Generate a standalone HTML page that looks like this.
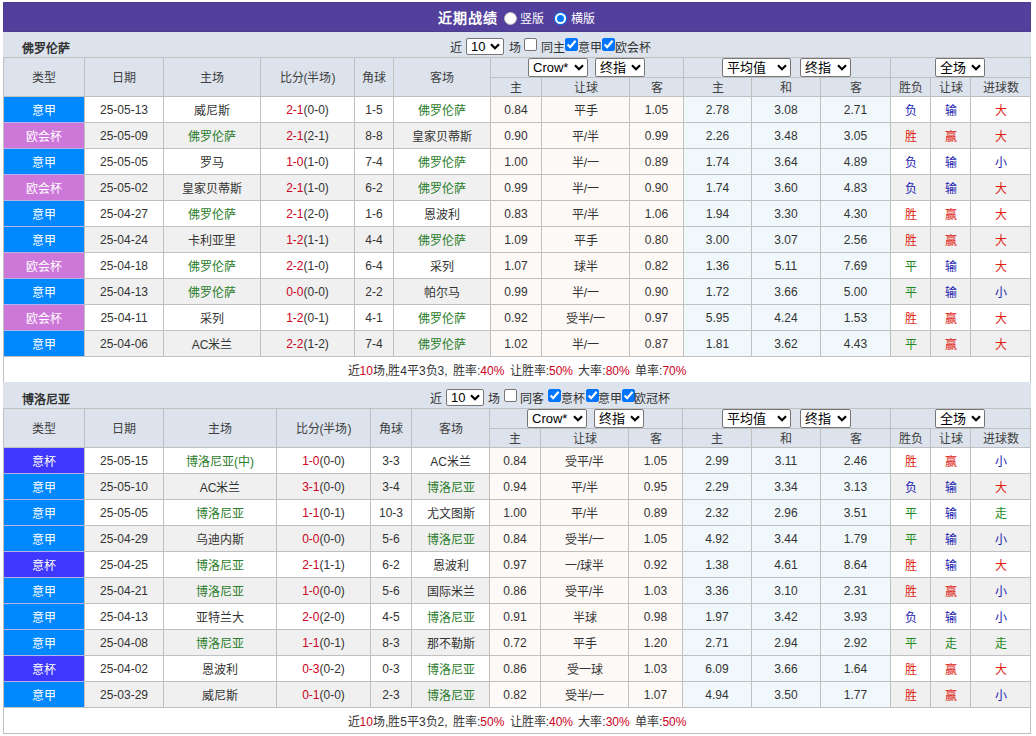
<!DOCTYPE html><html lang="zh-CN"><head><meta charset="utf-8"><style>
*{margin:0;padding:0;box-sizing:border-box}
html,body{width:1036px;height:736px;overflow:hidden;background:#fff}
body{position:relative;font-family:"Liberation Sans",sans-serif;font-size:12px;color:#333}
body>div{position:absolute}
.t{white-space:nowrap}
.g{background:#c0c0c0}
.sel{background:#fff;border:1px solid #767676;border-radius:2px;display:flex;align-items:center;padding-left:4px;color:#000;font-size:13px;white-space:nowrap}
.sel span{flex:1;line-height:14px}
.sel svg{margin-right:3px;flex:none}
.cb{width:13px;height:13px;border:1px solid #767676;border-radius:2px;background:#fff}
.cb.on{background:#0075ff;border-color:#0075ff}
.cb svg{position:absolute;left:-1px;top:-1px}
.rd{width:13px;height:13px;border-radius:50%;background:#fff;border:1px solid #bbb}
.rd.on{background:#0075ff;border:none}
.rd.on b{position:absolute;left:1px;top:1px;width:11px;height:11px;border-radius:50%;background:#0075ff;border:2px solid #fff}
</style></head><body><div style="left:3px;top:2px;width:1028px;height:30px;background:#52409c;box-sizing:border-box;border:1px solid #4b3e8c;"></div>
<div class="t" style="left:438px;top:9px;letter-spacing:1px;font-size:14px;font-weight:bold;color:#fff;line-height:18px;">近期战绩</div>
<div class="rd" style="left:504px;top:12px"></div>
<div class="t" style="left:520px;top:11px;color:#fff;line-height:16px;">竖版</div>
<div class="rd on" style="left:554px;top:12px"><b></b></div>
<div class="t" style="left:571px;top:11px;color:#fff;line-height:16px;">横版</div>
<div style="left:3px;top:32px;width:1028px;height:25px;background:#dce3ec;"></div>
<div class="t" style="left:22px;top:41px;font-weight:600;color:#333;line-height:16px;">佛罗伦萨</div>
<div class="t" style="left:450px;top:40px;line-height:16px;color:#333;">近</div>
<div class="sel" style="left:466px;top:38px;width:38px;height:17px;"><span>10</span><svg width="10" height="7" viewBox="0 0 10 7"><path d="M1 1.2 L5 5.2 L9 1.2" stroke="#000" stroke-width="2.2" fill="none"/></svg></div>
<div class="t" style="left:509px;top:40px;line-height:16px;color:#333;">场</div>
<div class="cb" style="left:524px;top:38px"></div>
<div class="t" style="left:541px;top:40px;line-height:16px;color:#333;">同主</div>
<div class="cb on" style="left:565px;top:38px"><svg width="13" height="13" viewBox="0 0 13 13"><path d="M2.6 6.4 L5.2 9.2 L10.6 2.8" stroke="#fff" stroke-width="2.2" fill="none"/></svg></div>
<div class="t" style="left:578px;top:40px;line-height:16px;color:#333;">意甲</div>
<div class="cb on" style="left:602px;top:38px"><svg width="13" height="13" viewBox="0 0 13 13"><path d="M2.6 6.4 L5.2 9.2 L10.6 2.8" stroke="#fff" stroke-width="2.2" fill="none"/></svg></div>
<div class="t" style="left:615px;top:40px;line-height:16px;color:#333;">欧会杯</div>
<div style="left:3px;top:57px;width:1028px;height:40px;background:#dce3ec;"></div>
<div style="left:4px;top:58px;width:80px;height:38px;display:flex;align-items:center;justify-content:center;color:#404040;padding-bottom:2px;">类型</div>
<div style="left:85px;top:58px;width:78px;height:38px;display:flex;align-items:center;justify-content:center;color:#404040;padding-bottom:2px;">日期</div>
<div style="left:164px;top:58px;width:96px;height:38px;display:flex;align-items:center;justify-content:center;color:#404040;padding-bottom:2px;">主场</div>
<div style="left:261px;top:58px;width:93px;height:38px;display:flex;align-items:center;justify-content:center;color:#404040;padding-bottom:2px;">比分(半场)</div>
<div style="left:355px;top:58px;width:38px;height:38px;display:flex;align-items:center;justify-content:center;color:#404040;padding-bottom:2px;">角球</div>
<div style="left:394px;top:58px;width:96px;height:38px;display:flex;align-items:center;justify-content:center;color:#404040;padding-bottom:2px;">客场</div>
<div style="left:491px;top:78px;width:50px;height:18px;display:flex;align-items:center;justify-content:center;color:#404040;padding-bottom:1px;">主</div>
<div style="left:542px;top:78px;width:87px;height:18px;display:flex;align-items:center;justify-content:center;color:#404040;padding-bottom:1px;">让球</div>
<div style="left:630px;top:78px;width:53px;height:18px;display:flex;align-items:center;justify-content:center;color:#404040;padding-bottom:1px;">客</div>
<div style="left:684px;top:78px;width:67px;height:18px;display:flex;align-items:center;justify-content:center;color:#404040;padding-bottom:1px;">主</div>
<div style="left:752px;top:78px;width:68px;height:18px;display:flex;align-items:center;justify-content:center;color:#404040;padding-bottom:1px;">和</div>
<div style="left:821px;top:78px;width:69px;height:18px;display:flex;align-items:center;justify-content:center;color:#404040;padding-bottom:1px;">客</div>
<div style="left:891px;top:78px;width:39px;height:18px;display:flex;align-items:center;justify-content:center;color:#404040;padding-bottom:1px;">胜负</div>
<div style="left:931px;top:78px;width:39px;height:18px;display:flex;align-items:center;justify-content:center;color:#404040;padding-bottom:1px;">让球</div>
<div style="left:971px;top:78px;width:59px;height:18px;display:flex;align-items:center;justify-content:center;color:#404040;padding-bottom:1px;">进球数</div>
<div style="left:3px;top:96px;width:1028px;height:27px;background:#ffffff;"></div>
<div style="left:4px;top:97px;width:80px;height:25px;background:#0088ff;"></div>
<div style="left:491px;top:97px;width:192px;height:25px;background:#fdf9f6;"></div>
<div style="left:684px;top:97px;width:206px;height:25px;background:#f0f8fc;"></div>
<div style="left:4px;top:97px;width:80px;height:25px;display:flex;align-items:center;justify-content:center;color:#fff;">意甲</div>
<div style="left:85px;top:97px;width:78px;height:25px;display:flex;align-items:center;justify-content:center;color:#333;">25-05-13</div>
<div style="left:164px;top:97px;width:96px;height:25px;display:flex;align-items:center;justify-content:center;color:#333;">威尼斯</div>
<div style="left:261px;top:97px;width:93px;height:25px;display:flex;align-items:center;justify-content:center;color:#333;"><span style="color:#cc0022">2-1</span>(0-0)</div>
<div style="left:355px;top:97px;width:38px;height:25px;display:flex;align-items:center;justify-content:center;color:#333;">1-5</div>
<div style="left:394px;top:97px;width:96px;height:25px;display:flex;align-items:center;justify-content:center;color:#2a7d2a;">佛罗伦萨</div>
<div style="left:491px;top:97px;width:50px;height:25px;display:flex;align-items:center;justify-content:center;color:#333;">0.84</div>
<div style="left:542px;top:97px;width:87px;height:25px;display:flex;align-items:center;justify-content:center;color:#333;">平手</div>
<div style="left:630px;top:97px;width:53px;height:25px;display:flex;align-items:center;justify-content:center;color:#333;">1.05</div>
<div style="left:684px;top:97px;width:67px;height:25px;display:flex;align-items:center;justify-content:center;color:#333;">2.78</div>
<div style="left:752px;top:97px;width:68px;height:25px;display:flex;align-items:center;justify-content:center;color:#333;">3.08</div>
<div style="left:821px;top:97px;width:69px;height:25px;display:flex;align-items:center;justify-content:center;color:#333;">2.71</div>
<div style="left:891px;top:97px;width:39px;height:25px;display:flex;align-items:center;justify-content:center;color:#1a1ab0;">负</div>
<div style="left:931px;top:97px;width:39px;height:25px;display:flex;align-items:center;justify-content:center;color:#1a1ab0;">输</div>
<div style="left:971px;top:97px;width:59px;height:25px;display:flex;align-items:center;justify-content:center;color:#dd2211;">大</div>
<div style="left:3px;top:122px;width:1028px;height:27px;background:#f0f0f0;"></div>
<div style="left:4px;top:123px;width:80px;height:25px;background:#cd78d8;"></div>
<div style="left:491px;top:123px;width:192px;height:25px;background:#fdf9f6;"></div>
<div style="left:684px;top:123px;width:206px;height:25px;background:#f0f8fc;"></div>
<div style="left:4px;top:123px;width:80px;height:25px;display:flex;align-items:center;justify-content:center;color:#fff;">欧会杯</div>
<div style="left:85px;top:123px;width:78px;height:25px;display:flex;align-items:center;justify-content:center;color:#333;">25-05-09</div>
<div style="left:164px;top:123px;width:96px;height:25px;display:flex;align-items:center;justify-content:center;color:#2a7d2a;">佛罗伦萨</div>
<div style="left:261px;top:123px;width:93px;height:25px;display:flex;align-items:center;justify-content:center;color:#333;"><span style="color:#cc0022">2-1</span>(2-1)</div>
<div style="left:355px;top:123px;width:38px;height:25px;display:flex;align-items:center;justify-content:center;color:#333;">8-8</div>
<div style="left:394px;top:123px;width:96px;height:25px;display:flex;align-items:center;justify-content:center;color:#333;">皇家贝蒂斯</div>
<div style="left:491px;top:123px;width:50px;height:25px;display:flex;align-items:center;justify-content:center;color:#333;">0.90</div>
<div style="left:542px;top:123px;width:87px;height:25px;display:flex;align-items:center;justify-content:center;color:#333;">平/半</div>
<div style="left:630px;top:123px;width:53px;height:25px;display:flex;align-items:center;justify-content:center;color:#333;">0.99</div>
<div style="left:684px;top:123px;width:67px;height:25px;display:flex;align-items:center;justify-content:center;color:#333;">2.26</div>
<div style="left:752px;top:123px;width:68px;height:25px;display:flex;align-items:center;justify-content:center;color:#333;">3.48</div>
<div style="left:821px;top:123px;width:69px;height:25px;display:flex;align-items:center;justify-content:center;color:#333;">3.05</div>
<div style="left:891px;top:123px;width:39px;height:25px;display:flex;align-items:center;justify-content:center;color:#dd2211;">胜</div>
<div style="left:931px;top:123px;width:39px;height:25px;display:flex;align-items:center;justify-content:center;color:#dd2211;">赢</div>
<div style="left:971px;top:123px;width:59px;height:25px;display:flex;align-items:center;justify-content:center;color:#dd2211;">大</div>
<div style="left:3px;top:148px;width:1028px;height:27px;background:#ffffff;"></div>
<div style="left:4px;top:149px;width:80px;height:25px;background:#0088ff;"></div>
<div style="left:491px;top:149px;width:192px;height:25px;background:#fdf9f6;"></div>
<div style="left:684px;top:149px;width:206px;height:25px;background:#f0f8fc;"></div>
<div style="left:4px;top:149px;width:80px;height:25px;display:flex;align-items:center;justify-content:center;color:#fff;">意甲</div>
<div style="left:85px;top:149px;width:78px;height:25px;display:flex;align-items:center;justify-content:center;color:#333;">25-05-05</div>
<div style="left:164px;top:149px;width:96px;height:25px;display:flex;align-items:center;justify-content:center;color:#333;">罗马</div>
<div style="left:261px;top:149px;width:93px;height:25px;display:flex;align-items:center;justify-content:center;color:#333;"><span style="color:#cc0022">1-0</span>(1-0)</div>
<div style="left:355px;top:149px;width:38px;height:25px;display:flex;align-items:center;justify-content:center;color:#333;">7-4</div>
<div style="left:394px;top:149px;width:96px;height:25px;display:flex;align-items:center;justify-content:center;color:#2a7d2a;">佛罗伦萨</div>
<div style="left:491px;top:149px;width:50px;height:25px;display:flex;align-items:center;justify-content:center;color:#333;">1.00</div>
<div style="left:542px;top:149px;width:87px;height:25px;display:flex;align-items:center;justify-content:center;color:#333;">半/一</div>
<div style="left:630px;top:149px;width:53px;height:25px;display:flex;align-items:center;justify-content:center;color:#333;">0.89</div>
<div style="left:684px;top:149px;width:67px;height:25px;display:flex;align-items:center;justify-content:center;color:#333;">1.74</div>
<div style="left:752px;top:149px;width:68px;height:25px;display:flex;align-items:center;justify-content:center;color:#333;">3.64</div>
<div style="left:821px;top:149px;width:69px;height:25px;display:flex;align-items:center;justify-content:center;color:#333;">4.89</div>
<div style="left:891px;top:149px;width:39px;height:25px;display:flex;align-items:center;justify-content:center;color:#1a1ab0;">负</div>
<div style="left:931px;top:149px;width:39px;height:25px;display:flex;align-items:center;justify-content:center;color:#1a1ab0;">输</div>
<div style="left:971px;top:149px;width:59px;height:25px;display:flex;align-items:center;justify-content:center;color:#1a1ab0;">小</div>
<div style="left:3px;top:174px;width:1028px;height:27px;background:#f0f0f0;"></div>
<div style="left:4px;top:175px;width:80px;height:25px;background:#cd78d8;"></div>
<div style="left:491px;top:175px;width:192px;height:25px;background:#fdf9f6;"></div>
<div style="left:684px;top:175px;width:206px;height:25px;background:#f0f8fc;"></div>
<div style="left:4px;top:175px;width:80px;height:25px;display:flex;align-items:center;justify-content:center;color:#fff;">欧会杯</div>
<div style="left:85px;top:175px;width:78px;height:25px;display:flex;align-items:center;justify-content:center;color:#333;">25-05-02</div>
<div style="left:164px;top:175px;width:96px;height:25px;display:flex;align-items:center;justify-content:center;color:#333;">皇家贝蒂斯</div>
<div style="left:261px;top:175px;width:93px;height:25px;display:flex;align-items:center;justify-content:center;color:#333;"><span style="color:#cc0022">2-1</span>(1-0)</div>
<div style="left:355px;top:175px;width:38px;height:25px;display:flex;align-items:center;justify-content:center;color:#333;">6-2</div>
<div style="left:394px;top:175px;width:96px;height:25px;display:flex;align-items:center;justify-content:center;color:#2a7d2a;">佛罗伦萨</div>
<div style="left:491px;top:175px;width:50px;height:25px;display:flex;align-items:center;justify-content:center;color:#333;">0.99</div>
<div style="left:542px;top:175px;width:87px;height:25px;display:flex;align-items:center;justify-content:center;color:#333;">半/一</div>
<div style="left:630px;top:175px;width:53px;height:25px;display:flex;align-items:center;justify-content:center;color:#333;">0.90</div>
<div style="left:684px;top:175px;width:67px;height:25px;display:flex;align-items:center;justify-content:center;color:#333;">1.74</div>
<div style="left:752px;top:175px;width:68px;height:25px;display:flex;align-items:center;justify-content:center;color:#333;">3.60</div>
<div style="left:821px;top:175px;width:69px;height:25px;display:flex;align-items:center;justify-content:center;color:#333;">4.83</div>
<div style="left:891px;top:175px;width:39px;height:25px;display:flex;align-items:center;justify-content:center;color:#1a1ab0;">负</div>
<div style="left:931px;top:175px;width:39px;height:25px;display:flex;align-items:center;justify-content:center;color:#1a1ab0;">输</div>
<div style="left:971px;top:175px;width:59px;height:25px;display:flex;align-items:center;justify-content:center;color:#dd2211;">大</div>
<div style="left:3px;top:200px;width:1028px;height:27px;background:#ffffff;"></div>
<div style="left:4px;top:201px;width:80px;height:25px;background:#0088ff;"></div>
<div style="left:491px;top:201px;width:192px;height:25px;background:#fdf9f6;"></div>
<div style="left:684px;top:201px;width:206px;height:25px;background:#f0f8fc;"></div>
<div style="left:4px;top:201px;width:80px;height:25px;display:flex;align-items:center;justify-content:center;color:#fff;">意甲</div>
<div style="left:85px;top:201px;width:78px;height:25px;display:flex;align-items:center;justify-content:center;color:#333;">25-04-27</div>
<div style="left:164px;top:201px;width:96px;height:25px;display:flex;align-items:center;justify-content:center;color:#2a7d2a;">佛罗伦萨</div>
<div style="left:261px;top:201px;width:93px;height:25px;display:flex;align-items:center;justify-content:center;color:#333;"><span style="color:#cc0022">2-1</span>(2-0)</div>
<div style="left:355px;top:201px;width:38px;height:25px;display:flex;align-items:center;justify-content:center;color:#333;">1-6</div>
<div style="left:394px;top:201px;width:96px;height:25px;display:flex;align-items:center;justify-content:center;color:#333;">恩波利</div>
<div style="left:491px;top:201px;width:50px;height:25px;display:flex;align-items:center;justify-content:center;color:#333;">0.83</div>
<div style="left:542px;top:201px;width:87px;height:25px;display:flex;align-items:center;justify-content:center;color:#333;">平/半</div>
<div style="left:630px;top:201px;width:53px;height:25px;display:flex;align-items:center;justify-content:center;color:#333;">1.06</div>
<div style="left:684px;top:201px;width:67px;height:25px;display:flex;align-items:center;justify-content:center;color:#333;">1.94</div>
<div style="left:752px;top:201px;width:68px;height:25px;display:flex;align-items:center;justify-content:center;color:#333;">3.30</div>
<div style="left:821px;top:201px;width:69px;height:25px;display:flex;align-items:center;justify-content:center;color:#333;">4.30</div>
<div style="left:891px;top:201px;width:39px;height:25px;display:flex;align-items:center;justify-content:center;color:#dd2211;">胜</div>
<div style="left:931px;top:201px;width:39px;height:25px;display:flex;align-items:center;justify-content:center;color:#dd2211;">赢</div>
<div style="left:971px;top:201px;width:59px;height:25px;display:flex;align-items:center;justify-content:center;color:#dd2211;">大</div>
<div style="left:3px;top:226px;width:1028px;height:27px;background:#f0f0f0;"></div>
<div style="left:4px;top:227px;width:80px;height:25px;background:#0088ff;"></div>
<div style="left:491px;top:227px;width:192px;height:25px;background:#fdf9f6;"></div>
<div style="left:684px;top:227px;width:206px;height:25px;background:#f0f8fc;"></div>
<div style="left:4px;top:227px;width:80px;height:25px;display:flex;align-items:center;justify-content:center;color:#fff;">意甲</div>
<div style="left:85px;top:227px;width:78px;height:25px;display:flex;align-items:center;justify-content:center;color:#333;">25-04-24</div>
<div style="left:164px;top:227px;width:96px;height:25px;display:flex;align-items:center;justify-content:center;color:#333;">卡利亚里</div>
<div style="left:261px;top:227px;width:93px;height:25px;display:flex;align-items:center;justify-content:center;color:#333;"><span style="color:#cc0022">1-2</span>(1-1)</div>
<div style="left:355px;top:227px;width:38px;height:25px;display:flex;align-items:center;justify-content:center;color:#333;">4-4</div>
<div style="left:394px;top:227px;width:96px;height:25px;display:flex;align-items:center;justify-content:center;color:#2a7d2a;">佛罗伦萨</div>
<div style="left:491px;top:227px;width:50px;height:25px;display:flex;align-items:center;justify-content:center;color:#333;">1.09</div>
<div style="left:542px;top:227px;width:87px;height:25px;display:flex;align-items:center;justify-content:center;color:#333;">平手</div>
<div style="left:630px;top:227px;width:53px;height:25px;display:flex;align-items:center;justify-content:center;color:#333;">0.80</div>
<div style="left:684px;top:227px;width:67px;height:25px;display:flex;align-items:center;justify-content:center;color:#333;">3.00</div>
<div style="left:752px;top:227px;width:68px;height:25px;display:flex;align-items:center;justify-content:center;color:#333;">3.07</div>
<div style="left:821px;top:227px;width:69px;height:25px;display:flex;align-items:center;justify-content:center;color:#333;">2.56</div>
<div style="left:891px;top:227px;width:39px;height:25px;display:flex;align-items:center;justify-content:center;color:#dd2211;">胜</div>
<div style="left:931px;top:227px;width:39px;height:25px;display:flex;align-items:center;justify-content:center;color:#dd2211;">赢</div>
<div style="left:971px;top:227px;width:59px;height:25px;display:flex;align-items:center;justify-content:center;color:#dd2211;">大</div>
<div style="left:3px;top:252px;width:1028px;height:27px;background:#ffffff;"></div>
<div style="left:4px;top:253px;width:80px;height:25px;background:#cd78d8;"></div>
<div style="left:491px;top:253px;width:192px;height:25px;background:#fdf9f6;"></div>
<div style="left:684px;top:253px;width:206px;height:25px;background:#f0f8fc;"></div>
<div style="left:4px;top:253px;width:80px;height:25px;display:flex;align-items:center;justify-content:center;color:#fff;">欧会杯</div>
<div style="left:85px;top:253px;width:78px;height:25px;display:flex;align-items:center;justify-content:center;color:#333;">25-04-18</div>
<div style="left:164px;top:253px;width:96px;height:25px;display:flex;align-items:center;justify-content:center;color:#2a7d2a;">佛罗伦萨</div>
<div style="left:261px;top:253px;width:93px;height:25px;display:flex;align-items:center;justify-content:center;color:#333;"><span style="color:#cc0022">2-2</span>(1-0)</div>
<div style="left:355px;top:253px;width:38px;height:25px;display:flex;align-items:center;justify-content:center;color:#333;">6-4</div>
<div style="left:394px;top:253px;width:96px;height:25px;display:flex;align-items:center;justify-content:center;color:#333;">采列</div>
<div style="left:491px;top:253px;width:50px;height:25px;display:flex;align-items:center;justify-content:center;color:#333;">1.07</div>
<div style="left:542px;top:253px;width:87px;height:25px;display:flex;align-items:center;justify-content:center;color:#333;">球半</div>
<div style="left:630px;top:253px;width:53px;height:25px;display:flex;align-items:center;justify-content:center;color:#333;">0.82</div>
<div style="left:684px;top:253px;width:67px;height:25px;display:flex;align-items:center;justify-content:center;color:#333;">1.36</div>
<div style="left:752px;top:253px;width:68px;height:25px;display:flex;align-items:center;justify-content:center;color:#333;">5.11</div>
<div style="left:821px;top:253px;width:69px;height:25px;display:flex;align-items:center;justify-content:center;color:#333;">7.69</div>
<div style="left:891px;top:253px;width:39px;height:25px;display:flex;align-items:center;justify-content:center;color:#1a8a1a;">平</div>
<div style="left:931px;top:253px;width:39px;height:25px;display:flex;align-items:center;justify-content:center;color:#1a1ab0;">输</div>
<div style="left:971px;top:253px;width:59px;height:25px;display:flex;align-items:center;justify-content:center;color:#dd2211;">大</div>
<div style="left:3px;top:278px;width:1028px;height:27px;background:#f0f0f0;"></div>
<div style="left:4px;top:279px;width:80px;height:25px;background:#0088ff;"></div>
<div style="left:491px;top:279px;width:192px;height:25px;background:#fdf9f6;"></div>
<div style="left:684px;top:279px;width:206px;height:25px;background:#f0f8fc;"></div>
<div style="left:4px;top:279px;width:80px;height:25px;display:flex;align-items:center;justify-content:center;color:#fff;">意甲</div>
<div style="left:85px;top:279px;width:78px;height:25px;display:flex;align-items:center;justify-content:center;color:#333;">25-04-13</div>
<div style="left:164px;top:279px;width:96px;height:25px;display:flex;align-items:center;justify-content:center;color:#2a7d2a;">佛罗伦萨</div>
<div style="left:261px;top:279px;width:93px;height:25px;display:flex;align-items:center;justify-content:center;color:#333;"><span style="color:#cc0022">0-0</span>(0-0)</div>
<div style="left:355px;top:279px;width:38px;height:25px;display:flex;align-items:center;justify-content:center;color:#333;">2-2</div>
<div style="left:394px;top:279px;width:96px;height:25px;display:flex;align-items:center;justify-content:center;color:#333;">帕尔马</div>
<div style="left:491px;top:279px;width:50px;height:25px;display:flex;align-items:center;justify-content:center;color:#333;">0.99</div>
<div style="left:542px;top:279px;width:87px;height:25px;display:flex;align-items:center;justify-content:center;color:#333;">半/一</div>
<div style="left:630px;top:279px;width:53px;height:25px;display:flex;align-items:center;justify-content:center;color:#333;">0.90</div>
<div style="left:684px;top:279px;width:67px;height:25px;display:flex;align-items:center;justify-content:center;color:#333;">1.72</div>
<div style="left:752px;top:279px;width:68px;height:25px;display:flex;align-items:center;justify-content:center;color:#333;">3.66</div>
<div style="left:821px;top:279px;width:69px;height:25px;display:flex;align-items:center;justify-content:center;color:#333;">5.00</div>
<div style="left:891px;top:279px;width:39px;height:25px;display:flex;align-items:center;justify-content:center;color:#1a8a1a;">平</div>
<div style="left:931px;top:279px;width:39px;height:25px;display:flex;align-items:center;justify-content:center;color:#1a1ab0;">输</div>
<div style="left:971px;top:279px;width:59px;height:25px;display:flex;align-items:center;justify-content:center;color:#1a1ab0;">小</div>
<div style="left:3px;top:304px;width:1028px;height:27px;background:#ffffff;"></div>
<div style="left:4px;top:305px;width:80px;height:25px;background:#cd78d8;"></div>
<div style="left:491px;top:305px;width:192px;height:25px;background:#fdf9f6;"></div>
<div style="left:684px;top:305px;width:206px;height:25px;background:#f0f8fc;"></div>
<div style="left:4px;top:305px;width:80px;height:25px;display:flex;align-items:center;justify-content:center;color:#fff;">欧会杯</div>
<div style="left:85px;top:305px;width:78px;height:25px;display:flex;align-items:center;justify-content:center;color:#333;">25-04-11</div>
<div style="left:164px;top:305px;width:96px;height:25px;display:flex;align-items:center;justify-content:center;color:#333;">采列</div>
<div style="left:261px;top:305px;width:93px;height:25px;display:flex;align-items:center;justify-content:center;color:#333;"><span style="color:#cc0022">1-2</span>(0-1)</div>
<div style="left:355px;top:305px;width:38px;height:25px;display:flex;align-items:center;justify-content:center;color:#333;">4-1</div>
<div style="left:394px;top:305px;width:96px;height:25px;display:flex;align-items:center;justify-content:center;color:#2a7d2a;">佛罗伦萨</div>
<div style="left:491px;top:305px;width:50px;height:25px;display:flex;align-items:center;justify-content:center;color:#333;">0.92</div>
<div style="left:542px;top:305px;width:87px;height:25px;display:flex;align-items:center;justify-content:center;color:#333;">受半/一</div>
<div style="left:630px;top:305px;width:53px;height:25px;display:flex;align-items:center;justify-content:center;color:#333;">0.97</div>
<div style="left:684px;top:305px;width:67px;height:25px;display:flex;align-items:center;justify-content:center;color:#333;">5.95</div>
<div style="left:752px;top:305px;width:68px;height:25px;display:flex;align-items:center;justify-content:center;color:#333;">4.24</div>
<div style="left:821px;top:305px;width:69px;height:25px;display:flex;align-items:center;justify-content:center;color:#333;">1.53</div>
<div style="left:891px;top:305px;width:39px;height:25px;display:flex;align-items:center;justify-content:center;color:#dd2211;">胜</div>
<div style="left:931px;top:305px;width:39px;height:25px;display:flex;align-items:center;justify-content:center;color:#dd2211;">赢</div>
<div style="left:971px;top:305px;width:59px;height:25px;display:flex;align-items:center;justify-content:center;color:#dd2211;">大</div>
<div style="left:3px;top:330px;width:1028px;height:27px;background:#f0f0f0;"></div>
<div style="left:4px;top:331px;width:80px;height:25px;background:#0088ff;"></div>
<div style="left:491px;top:331px;width:192px;height:25px;background:#fdf9f6;"></div>
<div style="left:684px;top:331px;width:206px;height:25px;background:#f0f8fc;"></div>
<div style="left:4px;top:331px;width:80px;height:25px;display:flex;align-items:center;justify-content:center;color:#fff;">意甲</div>
<div style="left:85px;top:331px;width:78px;height:25px;display:flex;align-items:center;justify-content:center;color:#333;">25-04-06</div>
<div style="left:164px;top:331px;width:96px;height:25px;display:flex;align-items:center;justify-content:center;color:#333;">AC米兰</div>
<div style="left:261px;top:331px;width:93px;height:25px;display:flex;align-items:center;justify-content:center;color:#333;"><span style="color:#cc0022">2-2</span>(1-2)</div>
<div style="left:355px;top:331px;width:38px;height:25px;display:flex;align-items:center;justify-content:center;color:#333;">7-4</div>
<div style="left:394px;top:331px;width:96px;height:25px;display:flex;align-items:center;justify-content:center;color:#2a7d2a;">佛罗伦萨</div>
<div style="left:491px;top:331px;width:50px;height:25px;display:flex;align-items:center;justify-content:center;color:#333;">1.02</div>
<div style="left:542px;top:331px;width:87px;height:25px;display:flex;align-items:center;justify-content:center;color:#333;">半/一</div>
<div style="left:630px;top:331px;width:53px;height:25px;display:flex;align-items:center;justify-content:center;color:#333;">0.87</div>
<div style="left:684px;top:331px;width:67px;height:25px;display:flex;align-items:center;justify-content:center;color:#333;">1.81</div>
<div style="left:752px;top:331px;width:68px;height:25px;display:flex;align-items:center;justify-content:center;color:#333;">3.62</div>
<div style="left:821px;top:331px;width:69px;height:25px;display:flex;align-items:center;justify-content:center;color:#333;">4.43</div>
<div style="left:891px;top:331px;width:39px;height:25px;display:flex;align-items:center;justify-content:center;color:#1a8a1a;">平</div>
<div style="left:931px;top:331px;width:39px;height:25px;display:flex;align-items:center;justify-content:center;color:#dd2211;">赢</div>
<div style="left:971px;top:331px;width:59px;height:25px;display:flex;align-items:center;justify-content:center;color:#dd2211;">大</div>
<div style="left:3px;top:356px;width:1028px;height:27px;"></div>
<div style="left:4px;top:357px;width:1026px;height:25px;display:flex;align-items:center;justify-content:center;color:#333;word-spacing:2px;"><span>近<span style="color:#cc0022">10</span>场,胜4平3负3, 胜率:<span style="color:#cc0022">40%</span> 让胜率:<span style="color:#cc0022">50%</span> 大率:<span style="color:#cc0022">80%</span> 单率:<span style="color:#cc0022">70%</span></span></div>
<div class="g" style="left:3px;top:57px;width:1028px;height:1px"></div>
<div class="g" style="left:490px;top:77px;width:541px;height:1px"></div>
<div class="g" style="left:3px;top:96px;width:1028px;height:1px"></div>
<div class="g" style="left:3px;top:122px;width:1028px;height:1px"></div>
<div class="g" style="left:3px;top:148px;width:1028px;height:1px"></div>
<div class="g" style="left:3px;top:174px;width:1028px;height:1px"></div>
<div class="g" style="left:3px;top:200px;width:1028px;height:1px"></div>
<div class="g" style="left:3px;top:226px;width:1028px;height:1px"></div>
<div class="g" style="left:3px;top:252px;width:1028px;height:1px"></div>
<div class="g" style="left:3px;top:278px;width:1028px;height:1px"></div>
<div class="g" style="left:3px;top:304px;width:1028px;height:1px"></div>
<div class="g" style="left:3px;top:330px;width:1028px;height:1px"></div>
<div class="g" style="left:3px;top:356px;width:1028px;height:1px"></div>
<div style="left:4px;top:122px;width:80px;height:1px;background:#b6b0ee"></div>
<div style="left:4px;top:148px;width:80px;height:1px;background:#b6b0ee"></div>
<div style="left:4px;top:174px;width:80px;height:1px;background:#b6b0ee"></div>
<div style="left:4px;top:200px;width:80px;height:1px;background:#b6b0ee"></div>
<div style="left:4px;top:226px;width:80px;height:1px;background:#b6b0ee"></div>
<div style="left:4px;top:252px;width:80px;height:1px;background:#b6b0ee"></div>
<div style="left:4px;top:278px;width:80px;height:1px;background:#b6b0ee"></div>
<div style="left:4px;top:304px;width:80px;height:1px;background:#b6b0ee"></div>
<div style="left:4px;top:330px;width:80px;height:1px;background:#b6b0ee"></div>
<div class="g" style="left:3px;top:382px;width:1028px;height:1px"></div>
<div class="g" style="left:3px;top:57px;width:1px;height:326px"></div>
<div class="g" style="left:1030px;top:57px;width:1px;height:326px"></div>
<div class="g" style="left:84px;top:57px;width:1px;height:300px"></div>
<div class="g" style="left:163px;top:57px;width:1px;height:300px"></div>
<div class="g" style="left:260px;top:57px;width:1px;height:300px"></div>
<div class="g" style="left:354px;top:57px;width:1px;height:300px"></div>
<div class="g" style="left:393px;top:57px;width:1px;height:300px"></div>
<div class="g" style="left:490px;top:57px;width:1px;height:300px"></div>
<div class="g" style="left:541px;top:77px;width:1px;height:280px"></div>
<div class="g" style="left:629px;top:77px;width:1px;height:280px"></div>
<div class="g" style="left:683px;top:57px;width:1px;height:300px"></div>
<div class="g" style="left:751px;top:77px;width:1px;height:280px"></div>
<div class="g" style="left:820px;top:77px;width:1px;height:280px"></div>
<div class="g" style="left:890px;top:57px;width:1px;height:300px"></div>
<div class="g" style="left:930px;top:77px;width:1px;height:280px"></div>
<div class="g" style="left:970px;top:77px;width:1px;height:280px"></div>
<div class="sel" style="left:528px;top:58px;width:60px;height:19px;"><span>Crow*</span><svg width="10" height="7" viewBox="0 0 10 7"><path d="M1 1.2 L5 5.2 L9 1.2" stroke="#000" stroke-width="2.2" fill="none"/></svg></div>
<div class="sel" style="left:595px;top:58px;width:50px;height:19px;"><span>终指</span><svg width="10" height="7" viewBox="0 0 10 7"><path d="M1 1.2 L5 5.2 L9 1.2" stroke="#000" stroke-width="2.2" fill="none"/></svg></div>
<div class="sel" style="left:722px;top:58px;width:69px;height:19px;"><span>平均值</span><svg width="10" height="7" viewBox="0 0 10 7"><path d="M1 1.2 L5 5.2 L9 1.2" stroke="#000" stroke-width="2.2" fill="none"/></svg></div>
<div class="sel" style="left:800px;top:58px;width:51px;height:19px;"><span>终指</span><svg width="10" height="7" viewBox="0 0 10 7"><path d="M1 1.2 L5 5.2 L9 1.2" stroke="#000" stroke-width="2.2" fill="none"/></svg></div>
<div class="sel" style="left:935px;top:58px;width:50px;height:19px;"><span>全场</span><svg width="10" height="7" viewBox="0 0 10 7"><path d="M1 1.2 L5 5.2 L9 1.2" stroke="#000" stroke-width="2.2" fill="none"/></svg></div>
<div style="left:3px;top:382px;width:1028px;height:26px;background:#dce3ec;"></div>
<div class="t" style="left:22px;top:392px;font-weight:600;color:#333;line-height:16px;">博洛尼亚</div>
<div class="t" style="left:430px;top:391px;line-height:16px;color:#333;">近</div>
<div class="sel" style="left:446px;top:389px;width:38px;height:17px;"><span>10</span><svg width="10" height="7" viewBox="0 0 10 7"><path d="M1 1.2 L5 5.2 L9 1.2" stroke="#000" stroke-width="2.2" fill="none"/></svg></div>
<div class="t" style="left:488px;top:391px;line-height:16px;color:#333;">场</div>
<div class="cb" style="left:504px;top:389px"></div>
<div class="t" style="left:520px;top:391px;line-height:16px;color:#333;">同客</div>
<div class="cb on" style="left:548px;top:389px"><svg width="13" height="13" viewBox="0 0 13 13"><path d="M2.6 6.4 L5.2 9.2 L10.6 2.8" stroke="#fff" stroke-width="2.2" fill="none"/></svg></div>
<div class="t" style="left:561px;top:391px;line-height:16px;color:#333;">意杯</div>
<div class="cb on" style="left:586px;top:389px"><svg width="13" height="13" viewBox="0 0 13 13"><path d="M2.6 6.4 L5.2 9.2 L10.6 2.8" stroke="#fff" stroke-width="2.2" fill="none"/></svg></div>
<div class="t" style="left:598px;top:391px;line-height:16px;color:#333;">意甲</div>
<div class="cb on" style="left:622px;top:389px"><svg width="13" height="13" viewBox="0 0 13 13"><path d="M2.6 6.4 L5.2 9.2 L10.6 2.8" stroke="#fff" stroke-width="2.2" fill="none"/></svg></div>
<div class="t" style="left:634px;top:391px;line-height:16px;color:#333;">欧冠杯</div>
<div style="left:3px;top:408px;width:1028px;height:40px;background:#dce3ec;"></div>
<div style="left:4px;top:409px;width:80px;height:38px;display:flex;align-items:center;justify-content:center;color:#404040;padding-bottom:2px;">类型</div>
<div style="left:85px;top:409px;width:78px;height:38px;display:flex;align-items:center;justify-content:center;color:#404040;padding-bottom:2px;">日期</div>
<div style="left:164px;top:409px;width:112px;height:38px;display:flex;align-items:center;justify-content:center;color:#404040;padding-bottom:2px;">主场</div>
<div style="left:277px;top:409px;width:93px;height:38px;display:flex;align-items:center;justify-content:center;color:#404040;padding-bottom:2px;">比分(半场)</div>
<div style="left:371px;top:409px;width:40px;height:38px;display:flex;align-items:center;justify-content:center;color:#404040;padding-bottom:2px;">角球</div>
<div style="left:412px;top:409px;width:77px;height:38px;display:flex;align-items:center;justify-content:center;color:#404040;padding-bottom:2px;">客场</div>
<div style="left:490px;top:429px;width:50px;height:18px;display:flex;align-items:center;justify-content:center;color:#404040;padding-bottom:1px;">主</div>
<div style="left:541px;top:429px;width:87px;height:18px;display:flex;align-items:center;justify-content:center;color:#404040;padding-bottom:1px;">让球</div>
<div style="left:629px;top:429px;width:53px;height:18px;display:flex;align-items:center;justify-content:center;color:#404040;padding-bottom:1px;">客</div>
<div style="left:683px;top:429px;width:68px;height:18px;display:flex;align-items:center;justify-content:center;color:#404040;padding-bottom:1px;">主</div>
<div style="left:752px;top:429px;width:68px;height:18px;display:flex;align-items:center;justify-content:center;color:#404040;padding-bottom:1px;">和</div>
<div style="left:821px;top:429px;width:69px;height:18px;display:flex;align-items:center;justify-content:center;color:#404040;padding-bottom:1px;">客</div>
<div style="left:891px;top:429px;width:39px;height:18px;display:flex;align-items:center;justify-content:center;color:#404040;padding-bottom:1px;">胜负</div>
<div style="left:931px;top:429px;width:39px;height:18px;display:flex;align-items:center;justify-content:center;color:#404040;padding-bottom:1px;">让球</div>
<div style="left:971px;top:429px;width:59px;height:18px;display:flex;align-items:center;justify-content:center;color:#404040;padding-bottom:1px;">进球数</div>
<div style="left:3px;top:447px;width:1028px;height:27px;background:#ffffff;"></div>
<div style="left:4px;top:448px;width:80px;height:25px;background:#4038ff;"></div>
<div style="left:490px;top:448px;width:192px;height:25px;background:#fdf9f6;"></div>
<div style="left:683px;top:448px;width:207px;height:25px;background:#f0f8fc;"></div>
<div style="left:4px;top:448px;width:80px;height:25px;display:flex;align-items:center;justify-content:center;color:#fff;">意杯</div>
<div style="left:85px;top:448px;width:78px;height:25px;display:flex;align-items:center;justify-content:center;color:#333;">25-05-15</div>
<div style="left:164px;top:448px;width:112px;height:25px;display:flex;align-items:center;justify-content:center;color:#2a7d2a;">博洛尼亚(中)</div>
<div style="left:277px;top:448px;width:93px;height:25px;display:flex;align-items:center;justify-content:center;color:#333;"><span style="color:#cc0022">1-0</span>(0-0)</div>
<div style="left:371px;top:448px;width:40px;height:25px;display:flex;align-items:center;justify-content:center;color:#333;">3-3</div>
<div style="left:412px;top:448px;width:77px;height:25px;display:flex;align-items:center;justify-content:center;color:#333;">AC米兰</div>
<div style="left:490px;top:448px;width:50px;height:25px;display:flex;align-items:center;justify-content:center;color:#333;">0.84</div>
<div style="left:541px;top:448px;width:87px;height:25px;display:flex;align-items:center;justify-content:center;color:#333;">受平/半</div>
<div style="left:629px;top:448px;width:53px;height:25px;display:flex;align-items:center;justify-content:center;color:#333;">1.05</div>
<div style="left:683px;top:448px;width:68px;height:25px;display:flex;align-items:center;justify-content:center;color:#333;">2.99</div>
<div style="left:752px;top:448px;width:68px;height:25px;display:flex;align-items:center;justify-content:center;color:#333;">3.11</div>
<div style="left:821px;top:448px;width:69px;height:25px;display:flex;align-items:center;justify-content:center;color:#333;">2.46</div>
<div style="left:891px;top:448px;width:39px;height:25px;display:flex;align-items:center;justify-content:center;color:#dd2211;">胜</div>
<div style="left:931px;top:448px;width:39px;height:25px;display:flex;align-items:center;justify-content:center;color:#dd2211;">赢</div>
<div style="left:971px;top:448px;width:59px;height:25px;display:flex;align-items:center;justify-content:center;color:#1a1ab0;">小</div>
<div style="left:3px;top:473px;width:1028px;height:27px;background:#f0f0f0;"></div>
<div style="left:4px;top:474px;width:80px;height:25px;background:#0088ff;"></div>
<div style="left:490px;top:474px;width:192px;height:25px;background:#fdf9f6;"></div>
<div style="left:683px;top:474px;width:207px;height:25px;background:#f0f8fc;"></div>
<div style="left:4px;top:474px;width:80px;height:25px;display:flex;align-items:center;justify-content:center;color:#fff;">意甲</div>
<div style="left:85px;top:474px;width:78px;height:25px;display:flex;align-items:center;justify-content:center;color:#333;">25-05-10</div>
<div style="left:164px;top:474px;width:112px;height:25px;display:flex;align-items:center;justify-content:center;color:#333;">AC米兰</div>
<div style="left:277px;top:474px;width:93px;height:25px;display:flex;align-items:center;justify-content:center;color:#333;"><span style="color:#cc0022">3-1</span>(0-0)</div>
<div style="left:371px;top:474px;width:40px;height:25px;display:flex;align-items:center;justify-content:center;color:#333;">3-4</div>
<div style="left:412px;top:474px;width:77px;height:25px;display:flex;align-items:center;justify-content:center;color:#2a7d2a;">博洛尼亚</div>
<div style="left:490px;top:474px;width:50px;height:25px;display:flex;align-items:center;justify-content:center;color:#333;">0.94</div>
<div style="left:541px;top:474px;width:87px;height:25px;display:flex;align-items:center;justify-content:center;color:#333;">平/半</div>
<div style="left:629px;top:474px;width:53px;height:25px;display:flex;align-items:center;justify-content:center;color:#333;">0.95</div>
<div style="left:683px;top:474px;width:68px;height:25px;display:flex;align-items:center;justify-content:center;color:#333;">2.29</div>
<div style="left:752px;top:474px;width:68px;height:25px;display:flex;align-items:center;justify-content:center;color:#333;">3.34</div>
<div style="left:821px;top:474px;width:69px;height:25px;display:flex;align-items:center;justify-content:center;color:#333;">3.13</div>
<div style="left:891px;top:474px;width:39px;height:25px;display:flex;align-items:center;justify-content:center;color:#1a1ab0;">负</div>
<div style="left:931px;top:474px;width:39px;height:25px;display:flex;align-items:center;justify-content:center;color:#1a1ab0;">输</div>
<div style="left:971px;top:474px;width:59px;height:25px;display:flex;align-items:center;justify-content:center;color:#dd2211;">大</div>
<div style="left:3px;top:499px;width:1028px;height:27px;background:#ffffff;"></div>
<div style="left:4px;top:500px;width:80px;height:25px;background:#0088ff;"></div>
<div style="left:490px;top:500px;width:192px;height:25px;background:#fdf9f6;"></div>
<div style="left:683px;top:500px;width:207px;height:25px;background:#f0f8fc;"></div>
<div style="left:4px;top:500px;width:80px;height:25px;display:flex;align-items:center;justify-content:center;color:#fff;">意甲</div>
<div style="left:85px;top:500px;width:78px;height:25px;display:flex;align-items:center;justify-content:center;color:#333;">25-05-05</div>
<div style="left:164px;top:500px;width:112px;height:25px;display:flex;align-items:center;justify-content:center;color:#2a7d2a;">博洛尼亚</div>
<div style="left:277px;top:500px;width:93px;height:25px;display:flex;align-items:center;justify-content:center;color:#333;"><span style="color:#cc0022">1-1</span>(0-1)</div>
<div style="left:371px;top:500px;width:40px;height:25px;display:flex;align-items:center;justify-content:center;color:#333;">10-3</div>
<div style="left:412px;top:500px;width:77px;height:25px;display:flex;align-items:center;justify-content:center;color:#333;">尤文图斯</div>
<div style="left:490px;top:500px;width:50px;height:25px;display:flex;align-items:center;justify-content:center;color:#333;">1.00</div>
<div style="left:541px;top:500px;width:87px;height:25px;display:flex;align-items:center;justify-content:center;color:#333;">平/半</div>
<div style="left:629px;top:500px;width:53px;height:25px;display:flex;align-items:center;justify-content:center;color:#333;">0.89</div>
<div style="left:683px;top:500px;width:68px;height:25px;display:flex;align-items:center;justify-content:center;color:#333;">2.32</div>
<div style="left:752px;top:500px;width:68px;height:25px;display:flex;align-items:center;justify-content:center;color:#333;">2.96</div>
<div style="left:821px;top:500px;width:69px;height:25px;display:flex;align-items:center;justify-content:center;color:#333;">3.51</div>
<div style="left:891px;top:500px;width:39px;height:25px;display:flex;align-items:center;justify-content:center;color:#1a8a1a;">平</div>
<div style="left:931px;top:500px;width:39px;height:25px;display:flex;align-items:center;justify-content:center;color:#1a1ab0;">输</div>
<div style="left:971px;top:500px;width:59px;height:25px;display:flex;align-items:center;justify-content:center;color:#1a8a1a;">走</div>
<div style="left:3px;top:525px;width:1028px;height:27px;background:#f0f0f0;"></div>
<div style="left:4px;top:526px;width:80px;height:25px;background:#0088ff;"></div>
<div style="left:490px;top:526px;width:192px;height:25px;background:#fdf9f6;"></div>
<div style="left:683px;top:526px;width:207px;height:25px;background:#f0f8fc;"></div>
<div style="left:4px;top:526px;width:80px;height:25px;display:flex;align-items:center;justify-content:center;color:#fff;">意甲</div>
<div style="left:85px;top:526px;width:78px;height:25px;display:flex;align-items:center;justify-content:center;color:#333;">25-04-29</div>
<div style="left:164px;top:526px;width:112px;height:25px;display:flex;align-items:center;justify-content:center;color:#333;">乌迪内斯</div>
<div style="left:277px;top:526px;width:93px;height:25px;display:flex;align-items:center;justify-content:center;color:#333;"><span style="color:#cc0022">0-0</span>(0-0)</div>
<div style="left:371px;top:526px;width:40px;height:25px;display:flex;align-items:center;justify-content:center;color:#333;">5-6</div>
<div style="left:412px;top:526px;width:77px;height:25px;display:flex;align-items:center;justify-content:center;color:#2a7d2a;">博洛尼亚</div>
<div style="left:490px;top:526px;width:50px;height:25px;display:flex;align-items:center;justify-content:center;color:#333;">0.84</div>
<div style="left:541px;top:526px;width:87px;height:25px;display:flex;align-items:center;justify-content:center;color:#333;">受半/一</div>
<div style="left:629px;top:526px;width:53px;height:25px;display:flex;align-items:center;justify-content:center;color:#333;">1.05</div>
<div style="left:683px;top:526px;width:68px;height:25px;display:flex;align-items:center;justify-content:center;color:#333;">4.92</div>
<div style="left:752px;top:526px;width:68px;height:25px;display:flex;align-items:center;justify-content:center;color:#333;">3.44</div>
<div style="left:821px;top:526px;width:69px;height:25px;display:flex;align-items:center;justify-content:center;color:#333;">1.79</div>
<div style="left:891px;top:526px;width:39px;height:25px;display:flex;align-items:center;justify-content:center;color:#1a8a1a;">平</div>
<div style="left:931px;top:526px;width:39px;height:25px;display:flex;align-items:center;justify-content:center;color:#1a1ab0;">输</div>
<div style="left:971px;top:526px;width:59px;height:25px;display:flex;align-items:center;justify-content:center;color:#1a1ab0;">小</div>
<div style="left:3px;top:551px;width:1028px;height:27px;background:#ffffff;"></div>
<div style="left:4px;top:552px;width:80px;height:25px;background:#4038ff;"></div>
<div style="left:490px;top:552px;width:192px;height:25px;background:#fdf9f6;"></div>
<div style="left:683px;top:552px;width:207px;height:25px;background:#f0f8fc;"></div>
<div style="left:4px;top:552px;width:80px;height:25px;display:flex;align-items:center;justify-content:center;color:#fff;">意杯</div>
<div style="left:85px;top:552px;width:78px;height:25px;display:flex;align-items:center;justify-content:center;color:#333;">25-04-25</div>
<div style="left:164px;top:552px;width:112px;height:25px;display:flex;align-items:center;justify-content:center;color:#2a7d2a;">博洛尼亚</div>
<div style="left:277px;top:552px;width:93px;height:25px;display:flex;align-items:center;justify-content:center;color:#333;"><span style="color:#cc0022">2-1</span>(1-1)</div>
<div style="left:371px;top:552px;width:40px;height:25px;display:flex;align-items:center;justify-content:center;color:#333;">6-2</div>
<div style="left:412px;top:552px;width:77px;height:25px;display:flex;align-items:center;justify-content:center;color:#333;">恩波利</div>
<div style="left:490px;top:552px;width:50px;height:25px;display:flex;align-items:center;justify-content:center;color:#333;">0.97</div>
<div style="left:541px;top:552px;width:87px;height:25px;display:flex;align-items:center;justify-content:center;color:#333;">一/球半</div>
<div style="left:629px;top:552px;width:53px;height:25px;display:flex;align-items:center;justify-content:center;color:#333;">0.92</div>
<div style="left:683px;top:552px;width:68px;height:25px;display:flex;align-items:center;justify-content:center;color:#333;">1.38</div>
<div style="left:752px;top:552px;width:68px;height:25px;display:flex;align-items:center;justify-content:center;color:#333;">4.61</div>
<div style="left:821px;top:552px;width:69px;height:25px;display:flex;align-items:center;justify-content:center;color:#333;">8.64</div>
<div style="left:891px;top:552px;width:39px;height:25px;display:flex;align-items:center;justify-content:center;color:#dd2211;">胜</div>
<div style="left:931px;top:552px;width:39px;height:25px;display:flex;align-items:center;justify-content:center;color:#1a1ab0;">输</div>
<div style="left:971px;top:552px;width:59px;height:25px;display:flex;align-items:center;justify-content:center;color:#dd2211;">大</div>
<div style="left:3px;top:577px;width:1028px;height:27px;background:#f0f0f0;"></div>
<div style="left:4px;top:578px;width:80px;height:25px;background:#0088ff;"></div>
<div style="left:490px;top:578px;width:192px;height:25px;background:#fdf9f6;"></div>
<div style="left:683px;top:578px;width:207px;height:25px;background:#f0f8fc;"></div>
<div style="left:4px;top:578px;width:80px;height:25px;display:flex;align-items:center;justify-content:center;color:#fff;">意甲</div>
<div style="left:85px;top:578px;width:78px;height:25px;display:flex;align-items:center;justify-content:center;color:#333;">25-04-21</div>
<div style="left:164px;top:578px;width:112px;height:25px;display:flex;align-items:center;justify-content:center;color:#2a7d2a;">博洛尼亚</div>
<div style="left:277px;top:578px;width:93px;height:25px;display:flex;align-items:center;justify-content:center;color:#333;"><span style="color:#cc0022">1-0</span>(0-0)</div>
<div style="left:371px;top:578px;width:40px;height:25px;display:flex;align-items:center;justify-content:center;color:#333;">5-6</div>
<div style="left:412px;top:578px;width:77px;height:25px;display:flex;align-items:center;justify-content:center;color:#333;">国际米兰</div>
<div style="left:490px;top:578px;width:50px;height:25px;display:flex;align-items:center;justify-content:center;color:#333;">0.86</div>
<div style="left:541px;top:578px;width:87px;height:25px;display:flex;align-items:center;justify-content:center;color:#333;">受平/半</div>
<div style="left:629px;top:578px;width:53px;height:25px;display:flex;align-items:center;justify-content:center;color:#333;">1.03</div>
<div style="left:683px;top:578px;width:68px;height:25px;display:flex;align-items:center;justify-content:center;color:#333;">3.36</div>
<div style="left:752px;top:578px;width:68px;height:25px;display:flex;align-items:center;justify-content:center;color:#333;">3.10</div>
<div style="left:821px;top:578px;width:69px;height:25px;display:flex;align-items:center;justify-content:center;color:#333;">2.31</div>
<div style="left:891px;top:578px;width:39px;height:25px;display:flex;align-items:center;justify-content:center;color:#dd2211;">胜</div>
<div style="left:931px;top:578px;width:39px;height:25px;display:flex;align-items:center;justify-content:center;color:#dd2211;">赢</div>
<div style="left:971px;top:578px;width:59px;height:25px;display:flex;align-items:center;justify-content:center;color:#1a1ab0;">小</div>
<div style="left:3px;top:603px;width:1028px;height:27px;background:#ffffff;"></div>
<div style="left:4px;top:604px;width:80px;height:25px;background:#0088ff;"></div>
<div style="left:490px;top:604px;width:192px;height:25px;background:#fdf9f6;"></div>
<div style="left:683px;top:604px;width:207px;height:25px;background:#f0f8fc;"></div>
<div style="left:4px;top:604px;width:80px;height:25px;display:flex;align-items:center;justify-content:center;color:#fff;">意甲</div>
<div style="left:85px;top:604px;width:78px;height:25px;display:flex;align-items:center;justify-content:center;color:#333;">25-04-13</div>
<div style="left:164px;top:604px;width:112px;height:25px;display:flex;align-items:center;justify-content:center;color:#333;">亚特兰大</div>
<div style="left:277px;top:604px;width:93px;height:25px;display:flex;align-items:center;justify-content:center;color:#333;"><span style="color:#cc0022">2-0</span>(2-0)</div>
<div style="left:371px;top:604px;width:40px;height:25px;display:flex;align-items:center;justify-content:center;color:#333;">4-5</div>
<div style="left:412px;top:604px;width:77px;height:25px;display:flex;align-items:center;justify-content:center;color:#2a7d2a;">博洛尼亚</div>
<div style="left:490px;top:604px;width:50px;height:25px;display:flex;align-items:center;justify-content:center;color:#333;">0.91</div>
<div style="left:541px;top:604px;width:87px;height:25px;display:flex;align-items:center;justify-content:center;color:#333;">半球</div>
<div style="left:629px;top:604px;width:53px;height:25px;display:flex;align-items:center;justify-content:center;color:#333;">0.98</div>
<div style="left:683px;top:604px;width:68px;height:25px;display:flex;align-items:center;justify-content:center;color:#333;">1.97</div>
<div style="left:752px;top:604px;width:68px;height:25px;display:flex;align-items:center;justify-content:center;color:#333;">3.42</div>
<div style="left:821px;top:604px;width:69px;height:25px;display:flex;align-items:center;justify-content:center;color:#333;">3.93</div>
<div style="left:891px;top:604px;width:39px;height:25px;display:flex;align-items:center;justify-content:center;color:#1a1ab0;">负</div>
<div style="left:931px;top:604px;width:39px;height:25px;display:flex;align-items:center;justify-content:center;color:#1a1ab0;">输</div>
<div style="left:971px;top:604px;width:59px;height:25px;display:flex;align-items:center;justify-content:center;color:#1a1ab0;">小</div>
<div style="left:3px;top:629px;width:1028px;height:27px;background:#f0f0f0;"></div>
<div style="left:4px;top:630px;width:80px;height:25px;background:#0088ff;"></div>
<div style="left:490px;top:630px;width:192px;height:25px;background:#fdf9f6;"></div>
<div style="left:683px;top:630px;width:207px;height:25px;background:#f0f8fc;"></div>
<div style="left:4px;top:630px;width:80px;height:25px;display:flex;align-items:center;justify-content:center;color:#fff;">意甲</div>
<div style="left:85px;top:630px;width:78px;height:25px;display:flex;align-items:center;justify-content:center;color:#333;">25-04-08</div>
<div style="left:164px;top:630px;width:112px;height:25px;display:flex;align-items:center;justify-content:center;color:#2a7d2a;">博洛尼亚</div>
<div style="left:277px;top:630px;width:93px;height:25px;display:flex;align-items:center;justify-content:center;color:#333;"><span style="color:#cc0022">1-1</span>(0-1)</div>
<div style="left:371px;top:630px;width:40px;height:25px;display:flex;align-items:center;justify-content:center;color:#333;">8-3</div>
<div style="left:412px;top:630px;width:77px;height:25px;display:flex;align-items:center;justify-content:center;color:#333;">那不勒斯</div>
<div style="left:490px;top:630px;width:50px;height:25px;display:flex;align-items:center;justify-content:center;color:#333;">0.72</div>
<div style="left:541px;top:630px;width:87px;height:25px;display:flex;align-items:center;justify-content:center;color:#333;">平手</div>
<div style="left:629px;top:630px;width:53px;height:25px;display:flex;align-items:center;justify-content:center;color:#333;">1.20</div>
<div style="left:683px;top:630px;width:68px;height:25px;display:flex;align-items:center;justify-content:center;color:#333;">2.71</div>
<div style="left:752px;top:630px;width:68px;height:25px;display:flex;align-items:center;justify-content:center;color:#333;">2.94</div>
<div style="left:821px;top:630px;width:69px;height:25px;display:flex;align-items:center;justify-content:center;color:#333;">2.92</div>
<div style="left:891px;top:630px;width:39px;height:25px;display:flex;align-items:center;justify-content:center;color:#1a8a1a;">平</div>
<div style="left:931px;top:630px;width:39px;height:25px;display:flex;align-items:center;justify-content:center;color:#1a8a1a;">走</div>
<div style="left:971px;top:630px;width:59px;height:25px;display:flex;align-items:center;justify-content:center;color:#1a8a1a;">走</div>
<div style="left:3px;top:655px;width:1028px;height:27px;background:#ffffff;"></div>
<div style="left:4px;top:656px;width:80px;height:25px;background:#4038ff;"></div>
<div style="left:490px;top:656px;width:192px;height:25px;background:#fdf9f6;"></div>
<div style="left:683px;top:656px;width:207px;height:25px;background:#f0f8fc;"></div>
<div style="left:4px;top:656px;width:80px;height:25px;display:flex;align-items:center;justify-content:center;color:#fff;">意杯</div>
<div style="left:85px;top:656px;width:78px;height:25px;display:flex;align-items:center;justify-content:center;color:#333;">25-04-02</div>
<div style="left:164px;top:656px;width:112px;height:25px;display:flex;align-items:center;justify-content:center;color:#333;">恩波利</div>
<div style="left:277px;top:656px;width:93px;height:25px;display:flex;align-items:center;justify-content:center;color:#333;"><span style="color:#cc0022">0-3</span>(0-2)</div>
<div style="left:371px;top:656px;width:40px;height:25px;display:flex;align-items:center;justify-content:center;color:#333;">0-3</div>
<div style="left:412px;top:656px;width:77px;height:25px;display:flex;align-items:center;justify-content:center;color:#2a7d2a;">博洛尼亚</div>
<div style="left:490px;top:656px;width:50px;height:25px;display:flex;align-items:center;justify-content:center;color:#333;">0.86</div>
<div style="left:541px;top:656px;width:87px;height:25px;display:flex;align-items:center;justify-content:center;color:#333;">受一球</div>
<div style="left:629px;top:656px;width:53px;height:25px;display:flex;align-items:center;justify-content:center;color:#333;">1.03</div>
<div style="left:683px;top:656px;width:68px;height:25px;display:flex;align-items:center;justify-content:center;color:#333;">6.09</div>
<div style="left:752px;top:656px;width:68px;height:25px;display:flex;align-items:center;justify-content:center;color:#333;">3.66</div>
<div style="left:821px;top:656px;width:69px;height:25px;display:flex;align-items:center;justify-content:center;color:#333;">1.64</div>
<div style="left:891px;top:656px;width:39px;height:25px;display:flex;align-items:center;justify-content:center;color:#dd2211;">胜</div>
<div style="left:931px;top:656px;width:39px;height:25px;display:flex;align-items:center;justify-content:center;color:#dd2211;">赢</div>
<div style="left:971px;top:656px;width:59px;height:25px;display:flex;align-items:center;justify-content:center;color:#dd2211;">大</div>
<div style="left:3px;top:681px;width:1028px;height:27px;background:#f0f0f0;"></div>
<div style="left:4px;top:682px;width:80px;height:25px;background:#0088ff;"></div>
<div style="left:490px;top:682px;width:192px;height:25px;background:#fdf9f6;"></div>
<div style="left:683px;top:682px;width:207px;height:25px;background:#f0f8fc;"></div>
<div style="left:4px;top:682px;width:80px;height:25px;display:flex;align-items:center;justify-content:center;color:#fff;">意甲</div>
<div style="left:85px;top:682px;width:78px;height:25px;display:flex;align-items:center;justify-content:center;color:#333;">25-03-29</div>
<div style="left:164px;top:682px;width:112px;height:25px;display:flex;align-items:center;justify-content:center;color:#333;">威尼斯</div>
<div style="left:277px;top:682px;width:93px;height:25px;display:flex;align-items:center;justify-content:center;color:#333;"><span style="color:#cc0022">0-1</span>(0-0)</div>
<div style="left:371px;top:682px;width:40px;height:25px;display:flex;align-items:center;justify-content:center;color:#333;">2-3</div>
<div style="left:412px;top:682px;width:77px;height:25px;display:flex;align-items:center;justify-content:center;color:#2a7d2a;">博洛尼亚</div>
<div style="left:490px;top:682px;width:50px;height:25px;display:flex;align-items:center;justify-content:center;color:#333;">0.82</div>
<div style="left:541px;top:682px;width:87px;height:25px;display:flex;align-items:center;justify-content:center;color:#333;">受半/一</div>
<div style="left:629px;top:682px;width:53px;height:25px;display:flex;align-items:center;justify-content:center;color:#333;">1.07</div>
<div style="left:683px;top:682px;width:68px;height:25px;display:flex;align-items:center;justify-content:center;color:#333;">4.94</div>
<div style="left:752px;top:682px;width:68px;height:25px;display:flex;align-items:center;justify-content:center;color:#333;">3.50</div>
<div style="left:821px;top:682px;width:69px;height:25px;display:flex;align-items:center;justify-content:center;color:#333;">1.77</div>
<div style="left:891px;top:682px;width:39px;height:25px;display:flex;align-items:center;justify-content:center;color:#dd2211;">胜</div>
<div style="left:931px;top:682px;width:39px;height:25px;display:flex;align-items:center;justify-content:center;color:#dd2211;">赢</div>
<div style="left:971px;top:682px;width:59px;height:25px;display:flex;align-items:center;justify-content:center;color:#1a1ab0;">小</div>
<div style="left:3px;top:707px;width:1028px;height:27px;"></div>
<div style="left:4px;top:708px;width:1026px;height:25px;display:flex;align-items:center;justify-content:center;color:#333;word-spacing:2px;"><span>近<span style="color:#cc0022">10</span>场,胜5平3负2, 胜率:<span style="color:#cc0022">50%</span> 让胜率:<span style="color:#cc0022">40%</span> 大率:<span style="color:#cc0022">30%</span> 单率:<span style="color:#cc0022">50%</span></span></div>
<div class="g" style="left:3px;top:408px;width:1028px;height:1px"></div>
<div class="g" style="left:489px;top:428px;width:542px;height:1px"></div>
<div class="g" style="left:3px;top:447px;width:1028px;height:1px"></div>
<div class="g" style="left:3px;top:473px;width:1028px;height:1px"></div>
<div class="g" style="left:3px;top:499px;width:1028px;height:1px"></div>
<div class="g" style="left:3px;top:525px;width:1028px;height:1px"></div>
<div class="g" style="left:3px;top:551px;width:1028px;height:1px"></div>
<div class="g" style="left:3px;top:577px;width:1028px;height:1px"></div>
<div class="g" style="left:3px;top:603px;width:1028px;height:1px"></div>
<div class="g" style="left:3px;top:629px;width:1028px;height:1px"></div>
<div class="g" style="left:3px;top:655px;width:1028px;height:1px"></div>
<div class="g" style="left:3px;top:681px;width:1028px;height:1px"></div>
<div class="g" style="left:3px;top:707px;width:1028px;height:1px"></div>
<div style="left:4px;top:473px;width:80px;height:1px;background:#b6b0ee"></div>
<div style="left:4px;top:499px;width:80px;height:1px;background:#b6b0ee"></div>
<div style="left:4px;top:525px;width:80px;height:1px;background:#b6b0ee"></div>
<div style="left:4px;top:551px;width:80px;height:1px;background:#b6b0ee"></div>
<div style="left:4px;top:577px;width:80px;height:1px;background:#b6b0ee"></div>
<div style="left:4px;top:603px;width:80px;height:1px;background:#b6b0ee"></div>
<div style="left:4px;top:629px;width:80px;height:1px;background:#b6b0ee"></div>
<div style="left:4px;top:655px;width:80px;height:1px;background:#b6b0ee"></div>
<div style="left:4px;top:681px;width:80px;height:1px;background:#b6b0ee"></div>
<div class="g" style="left:3px;top:733px;width:1028px;height:1px"></div>
<div class="g" style="left:3px;top:408px;width:1px;height:326px"></div>
<div class="g" style="left:1030px;top:408px;width:1px;height:326px"></div>
<div class="g" style="left:84px;top:408px;width:1px;height:300px"></div>
<div class="g" style="left:163px;top:408px;width:1px;height:300px"></div>
<div class="g" style="left:276px;top:408px;width:1px;height:300px"></div>
<div class="g" style="left:370px;top:408px;width:1px;height:300px"></div>
<div class="g" style="left:411px;top:408px;width:1px;height:300px"></div>
<div class="g" style="left:489px;top:408px;width:1px;height:300px"></div>
<div class="g" style="left:540px;top:428px;width:1px;height:280px"></div>
<div class="g" style="left:628px;top:428px;width:1px;height:280px"></div>
<div class="g" style="left:682px;top:408px;width:1px;height:300px"></div>
<div class="g" style="left:751px;top:428px;width:1px;height:280px"></div>
<div class="g" style="left:820px;top:428px;width:1px;height:280px"></div>
<div class="g" style="left:890px;top:408px;width:1px;height:300px"></div>
<div class="g" style="left:930px;top:428px;width:1px;height:280px"></div>
<div class="g" style="left:970px;top:428px;width:1px;height:280px"></div>
<div class="sel" style="left:527px;top:409px;width:60px;height:19px;"><span>Crow*</span><svg width="10" height="7" viewBox="0 0 10 7"><path d="M1 1.2 L5 5.2 L9 1.2" stroke="#000" stroke-width="2.2" fill="none"/></svg></div>
<div class="sel" style="left:594px;top:409px;width:50px;height:19px;"><span>终指</span><svg width="10" height="7" viewBox="0 0 10 7"><path d="M1 1.2 L5 5.2 L9 1.2" stroke="#000" stroke-width="2.2" fill="none"/></svg></div>
<div class="sel" style="left:722px;top:409px;width:69px;height:19px;"><span>平均值</span><svg width="10" height="7" viewBox="0 0 10 7"><path d="M1 1.2 L5 5.2 L9 1.2" stroke="#000" stroke-width="2.2" fill="none"/></svg></div>
<div class="sel" style="left:800px;top:409px;width:51px;height:19px;"><span>终指</span><svg width="10" height="7" viewBox="0 0 10 7"><path d="M1 1.2 L5 5.2 L9 1.2" stroke="#000" stroke-width="2.2" fill="none"/></svg></div>
<div class="sel" style="left:935px;top:409px;width:50px;height:19px;"><span>全场</span><svg width="10" height="7" viewBox="0 0 10 7"><path d="M1 1.2 L5 5.2 L9 1.2" stroke="#000" stroke-width="2.2" fill="none"/></svg></div></body></html>
